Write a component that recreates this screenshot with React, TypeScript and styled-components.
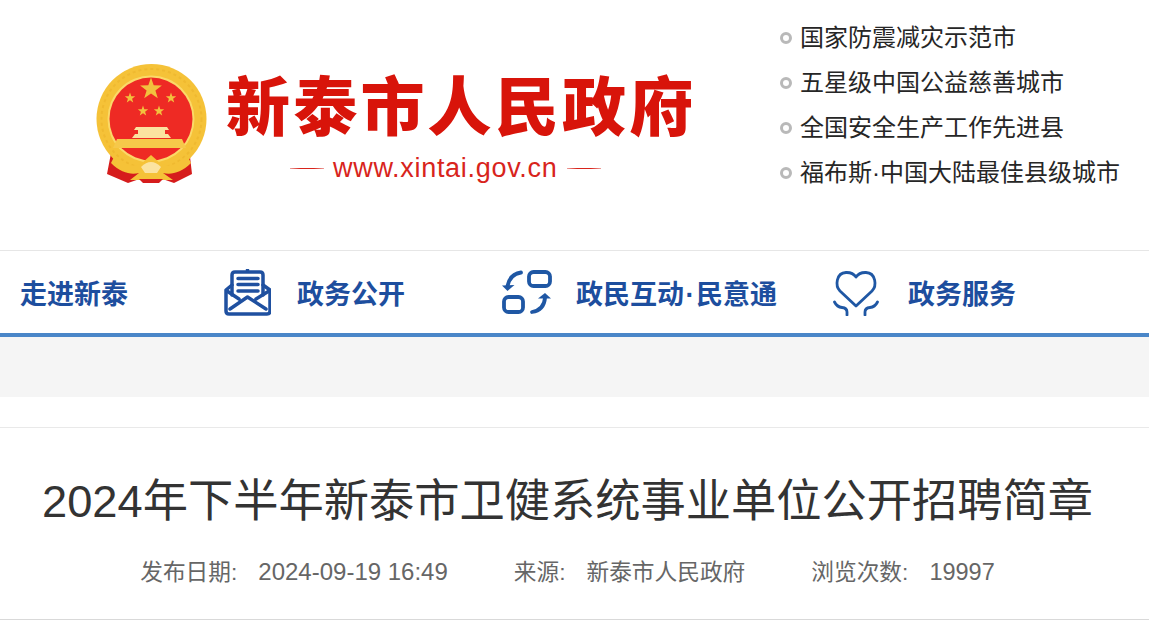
import React from "react";
import styled, { createGlobalStyle } from "styled-components";

const GlobalStyle = createGlobalStyle`
  html, body {
    margin: 0;
    padding: 0;
    background: #fff;
    overflow: hidden;
  }
  body {
    font-family: "Liberation Sans", "Noto Sans CJK SC", sans-serif;
  }
`;

const Page = styled.div`
  width: 1149px;
  height: 622px;
  overflow: hidden;
`;

const Header = styled.header`
  height: 250px;
  display: flex;
  justify-content: space-between;
`;

const Brand = styled.div`
  display: flex;
  gap: 18px;
  padding: 63px 0 0 95px;
`;

const BrandText = styled.div`
  display: flex;
  flex-direction: column;
  width: 470px;
`;

const BrandName = styled.div`
  font: 900 64px/78px "Noto Sans CJK SC", sans-serif;
  letter-spacing: 3.2px;
  color: #d8140a;
  white-space: nowrap;
  height: 87px;
`;

const BrandUrlRow = styled.div`
  display: flex;
  align-items: center;
  gap: 9px;
  margin-left: 64px;
  color: #d8241c;
  font: 27px/36px "Liberation Sans", sans-serif;
  letter-spacing: 0.7px;
  white-space: nowrap;
`;

const UrlRule = styled.span`
  width: 34px;
  height: 1px;
  background: linear-gradient(90deg, #eda09c, #d8241c 30%, #d8241c 70%, #eda09c);
`;

const Slogans = styled.ul`
  list-style: none;
  margin: 0;
  padding: 15px 0 0;
  width: 369px;
  box-sizing: border-box;
`;

const Slogan = styled.li`
  display: flex;
  align-items: center;
  gap: 8px;
  height: 45px;
  font-size: 24px;
  line-height: 30px;
  color: #262626;
  white-space: nowrap;
`;

const Bullet = styled.span`
  flex: none;
  width: 12px;
  height: 12px;
  box-sizing: border-box;
  border: 3px solid #b9b9b9;
  border-radius: 50%;
`;

const Nav = styled.nav`
  height: 87px;
  box-sizing: border-box;
  border-top: 1px solid #e6e6e6;
  border-bottom: 4px solid #4a86c8;
  padding-left: 20px;
  display: grid;
  grid-template-columns: 204px 277px 332px 1fr;
  align-items: center;
`;

const NavItem = styled.a<{ $gap?: number }>`
  display: flex;
  align-items: center;
  gap: ${(p) => p.$gap ?? 0}px;
  font-size: 27px;
  line-height: 36px;
  font-weight: 700;
  color: #1d4e9e;
  white-space: nowrap;
`;

const NavLabel = styled.span`
  margin-top: 6px;
`;

const NavDot = styled.span`
  margin: 0 1.5px;
`;

const Band = styled.div`
  height: 60px;
  background: #f5f5f5;
`;

const Article = styled.section`
  margin-top: 30px;
  border-top: 1px solid #e9e9e9;
  border-bottom: 1px solid #d9d9d9;
  height: 193px;
  box-sizing: border-box;
  padding-right: 14px;
  text-align: center;
`;

const Title = styled.h1`
  margin: 0;
  padding-top: 43px;
  font-size: 45.25px;
  font-weight: 400;
  line-height: 62px;
  color: #333;
  white-space: nowrap;
`;

const Meta = styled.div`
  display: flex;
  justify-content: center;
  gap: 66px;
  margin-top: 22px;
  font-size: 22.7px;
  line-height: 34px;
  color: #666;
`;

const MetaItem = styled.span`
  display: flex;
  align-items: baseline;
  gap: 21px;
  white-space: nowrap;
`;

const MetaValue = styled.span<{ $size?: number }>`
  font-size: ${(p) => p.$size ?? 22.7}px;
`;

const starPoints = (cx: number, cy: number, r: number) =>
  Array.from({ length: 10 }, (_, i) => {
    const a = (-90 + i * 36) * (Math.PI / 180);
    const d = i % 2 === 0 ? r : r * 0.4;
    return `${(cx + d * Math.cos(a)).toFixed(1)},${(cy + d * Math.sin(a)).toFixed(1)}`;
  }).join(" ");

const Emblem = () => (
  <svg width="113" height="121" viewBox="0 0 113 121">
    <path d="M17 85 L12 111 L33 120 L56 112 L79 120 L97 111 L94 85 Z" fill="#d61c1c" />
    <circle cx="56.5" cy="56" r="55" fill="#f5c238" />
    <circle cx="56.5" cy="56" r="50" fill="none" stroke="#efb930" strokeWidth="2" strokeDasharray="3 3" />
    <circle cx="56" cy="56" r="43.500" fill="#fbd968" />
    <circle cx="56" cy="56" r="41.500" fill="#ee2a24" />
    <polygon points={starPoints(56, 26, 11.5)} fill="#f2c13e" />
    <polygon points={starPoints(35, 35, 5.5)} fill="#f2c13e" />
    <polygon points={starPoints(76, 35, 5.5)} fill="#f2c13e" />
    <polygon points={starPoints(48, 48, 5.5)} fill="#f2c13e" />
    <polygon points={starPoints(64, 48, 5.5)} fill="#f2c13e" />
    <path d="M41 64 H72 L74 67 H70 V71 H73 L76 75 H37 L40 71 H43 V67 H39 Z" fill="#fbe3a0" />
    <path d="M22 76 H87 L91 85 H18 Z" fill="#f6c84a" />
    <path d="M20 92 C30 102 38 105 47 100 L56 92 L65 100 C74 105 82 102 92 92 L96 100 C86 110 76 112 68 110 L78 117 H35 L44 110 C36 112 26 110 16 100 Z" fill="#f5c238" />
    <path d="M46 104 Q56 94 66 104 L62 110 H50 Z" fill="#fbe3a0" />
    <path d="M44 116 H68 L64 120 H48 Z" fill="#d61c1c" />
  </svg>
);

const MailIcon = () => (
  <svg width="47" height="47" viewBox="0 0 47 47" fill="none" stroke="#1f50a0" strokeWidth="3.5" strokeLinejoin="round" strokeLinecap="round">
    <path d="M8 16 L2 21 V42 Q2 45 5 45 H43 Q46 45 46 42 V21 L39 16" />
    <path d="M8 26 V6 Q8 3 11 3 H36 Q39 3 39 6 V26" />
    <path d="M23.500 1 V2" />
    <path d="M3 22 L15 30 M45 22 L32 30 M6 40 L23.500 28 L42 40" />
    <path d="M14 9.500 H34 M14 15.500 H34 M14 22 H34" />
  </svg>
);

const ExchangeIcon = () => (
  <svg width="51" height="47" viewBox="0 0 51 47" fill="none" stroke="#1f57a4" strokeWidth="3.800" strokeLinecap="round" strokeLinejoin="round">
    <rect x="28" y="3" width="21" height="14" rx="4.500" />
    <rect x="3" y="28" width="19" height="15" rx="4.500" />
    <path d="M20 3.500 Q9 5 6.500 17" />
    <polygon points="1,16.500 6.500,22 13.500,16" fill="#1f57a4" stroke="none" />
    <path d="M31 43 Q43 41 44 29" />
    <polygon points="37,29.500 44,24 50,29.500" fill="#1f57a4" stroke="none" />
  </svg>
);

const HeartIcon = () => (
  <svg width="46" height="47" viewBox="0 0 46 47" fill="none" stroke="#1f57a4" strokeWidth="2.800" strokeLinecap="round" strokeLinejoin="round">
    <path d="M23 37 L7 22 C2 17 3 4 13 3.500 C18 3.300 21 5 23 8 C25 5 28 3.300 33 3.500 C43 4 44 17 39 22 Z" />
    <path d="M1.500 33 Q4 38 9 38.500 Q14 39 14 43 V46" />
    <path d="M44.500 33 Q42 38 37 38.500 Q32 39 32 43 V46" />
  </svg>
);

const slogans = [
  "国家防震减灾示范市",
  "五星级中国公益慈善城市",
  "全国安全生产工作先进县",
  "福布斯·中国大陆最佳县级城市",
];

function App() {
  return (
    <Page>
      <GlobalStyle />
      <Header>
        <Brand>
          <Emblem />
          <BrandText>
            <BrandName>新泰市人民政府</BrandName>
            <BrandUrlRow>
              <UrlRule />
              www.xintai.gov.cn
              <UrlRule />
            </BrandUrlRow>
          </BrandText>
        </Brand>
        <Slogans>
          {slogans.map((s) => (
            <Slogan key={s}>
              <Bullet />
              {s}
            </Slogan>
          ))}
        </Slogans>
      </Header>
      <Nav>
        <NavItem>
          <NavLabel>走进新泰</NavLabel>
        </NavItem>
        <NavItem $gap={26}>
          <MailIcon />
          <NavLabel>政务公开</NavLabel>
        </NavItem>
        <NavItem $gap={24}>
          <ExchangeIcon />
          <NavLabel>
            政民互动<NavDot>·</NavDot>民意通
          </NavLabel>
        </NavItem>
        <NavItem $gap={29}>
          <HeartIcon />
          <NavLabel>政务服务</NavLabel>
        </NavItem>
      </Nav>
      <Band />
      <Article>
        <Title>2024年下半年新泰市卫健系统事业单位公开招聘简章</Title>
        <Meta>
          <MetaItem>
            <span>发布日期:</span>
            <MetaValue $size={24}>2024-09-19 16:49</MetaValue>
          </MetaItem>
          <MetaItem>
            <span>来源:</span>
            <MetaValue>新泰市人民政府</MetaValue>
          </MetaItem>
          <MetaItem>
            <span>浏览次数:</span>
            <MetaValue $size={23.5}>19997</MetaValue>
          </MetaItem>
        </Meta>
      </Article>
    </Page>
  );
}

export default App;
